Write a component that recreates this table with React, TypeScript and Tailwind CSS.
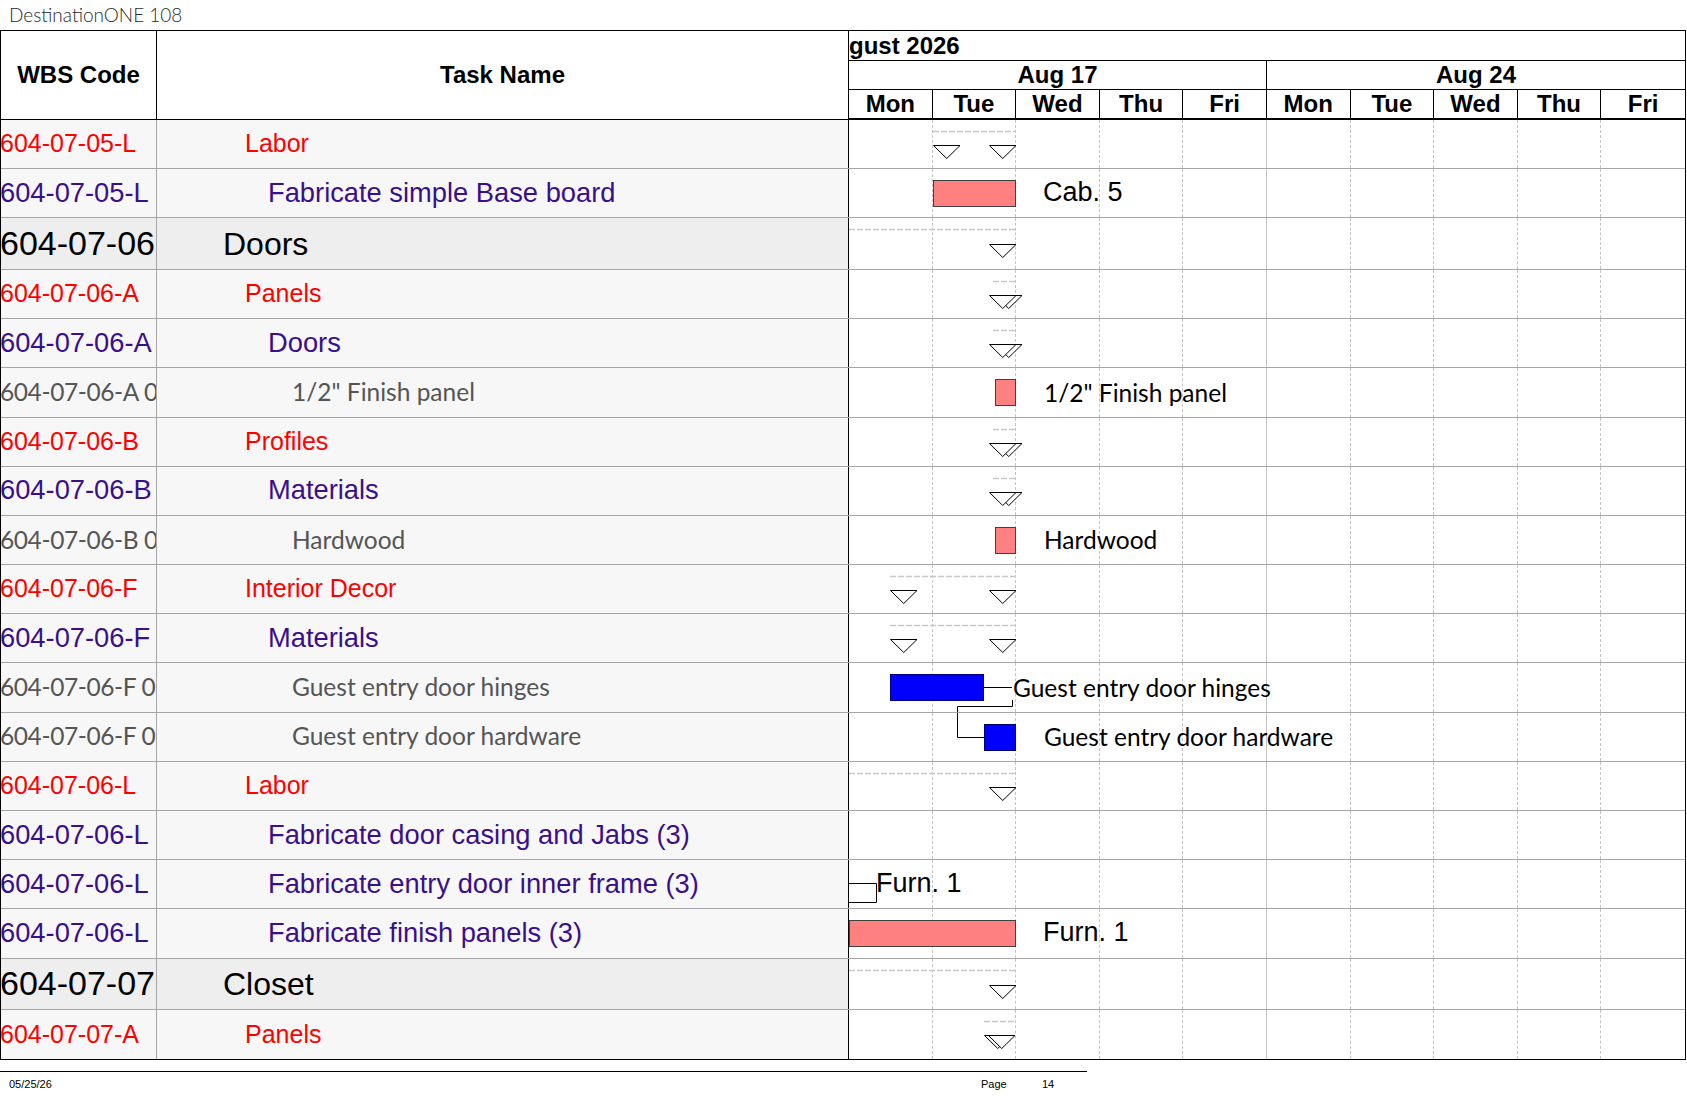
import React from "react";

type Level = 1 | 2 | 3 | 4;
type Row = {
  level: Level;
  wbs: string;
  task: string;
  dash?: [number, number];
  tris?: number[];
  dbl?: { front: number; back: number };
  bar?: { x1: number; x2: number; color: "pink" | "blue" };
  label?: { x: number; text: string; font: "arial" | "lato" };
  extra?: "hinges" | "hardware" | "furn";
};

const rows: Row[] = [
  { level: 2, wbs: "604-07-05-L", task: "Labor", dash: [84, 167], tris: [84, 140] },
  { level: 3, wbs: "604-07-05-L", task: "Fabricate simple Base board", bar: { x1: 84, x2: 167, color: "pink" }, label: { x: 194, text: "Cab. 5", font: "arial" } },
  { level: 1, wbs: "604-07-06", task: "Doors", dash: [0, 167], tris: [140] },
  { level: 2, wbs: "604-07-06-A", task: "Panels", dash: [144, 167], dbl: { front: 140, back: 146 } },
  { level: 3, wbs: "604-07-06-A", task: "Doors", dash: [144, 167], dbl: { front: 140, back: 146 } },
  { level: 4, wbs: "604-07-06-A 0", task: "1/2\" Finish panel", bar: { x1: 146, x2: 167, color: "pink" }, label: { x: 195, text: "1/2\" Finish panel", font: "lato" } },
  { level: 2, wbs: "604-07-06-B", task: "Profiles", dash: [144, 167], dbl: { front: 140, back: 146 } },
  { level: 3, wbs: "604-07-06-B", task: "Materials", dash: [144, 167], dbl: { front: 140, back: 146 } },
  { level: 4, wbs: "604-07-06-B 0", task: "Hardwood", bar: { x1: 146, x2: 167, color: "pink" }, label: { x: 195, text: "Hardwood", font: "lato" } },
  { level: 2, wbs: "604-07-06-F", task: "Interior Decor", dash: [41, 167], tris: [41, 140] },
  { level: 3, wbs: "604-07-06-F", task: "Materials", dash: [41, 167], tris: [41, 140] },
  { level: 4, wbs: "604-07-06-F 0", task: "Guest entry door hinges", bar: { x1: 41, x2: 135, color: "blue" }, label: { x: 164, text: "Guest entry door hinges", font: "lato" }, extra: "hinges" },
  { level: 4, wbs: "604-07-06-F 0", task: "Guest entry door hardware", bar: { x1: 135, x2: 167, color: "blue" }, label: { x: 195, text: "Guest entry door hardware", font: "lato" }, extra: "hardware" },
  { level: 2, wbs: "604-07-06-L", task: "Labor", dash: [0, 167], tris: [140] },
  { level: 3, wbs: "604-07-06-L", task: "Fabricate door casing and Jabs (3)" },
  { level: 3, wbs: "604-07-06-L", task: "Fabricate entry door inner frame (3)", label: { x: 27, text: "Furn. 1", font: "arial" }, extra: "furn" },
  { level: 3, wbs: "604-07-06-L", task: "Fabricate finish panels (3)", bar: { x1: 0, x2: 167, color: "pink" }, label: { x: 194, text: "Furn. 1", font: "arial" } },
  { level: 1, wbs: "604-07-07", task: "Closet", dash: [0, 167], tris: [140] },
  { level: 2, wbs: "604-07-07-A", task: "Panels", dash: [135, 167], dbl: { front: 139, back: 135 } },
];

const days = ["Mon", "Tue", "Wed", "Thu", "Fri", "Mon", "Tue", "Wed", "Thu", "Fri"];

function tri(x: number, y: number, key: string) {
  return (
    <polygon
      key={key}
      points={`${x + 0.5},${y + 0.5} ${x + 27},${y + 0.5} ${x + 13.75},${y + 13.5}`}
      fill="white"
      stroke="black"
      strokeWidth={1}
    />
  );
}

function wbsClass(l: Level) {
  if (l === 1) return "text-[34px] text-black";
  if (l === 2) return "text-[25px] text-[#ff0000]";
  if (l === 3) return "text-[27.3px] text-[#3a0f8c]";
  return "font-['Lato',sans-serif] text-[24.5px] tracking-[-0.4px] text-[#555555]";
}

function taskClass(l: Level) {
  if (l === 1) return "pl-[66px] text-[32px] text-black";
  if (l === 2) return "pl-[88px] text-[25px] text-[#ff0000]";
  if (l === 3) return "pl-[111px] text-[27.3px] text-[#3a0f8c]";
  return "pl-[135px] font-['Lato',sans-serif] text-[24.5px] text-[#555555]";
}

function GanttRow({ r, h }: { r: Row; h: number }) {
  const triTop = r.level === 1 ? 26 : 25;
  return (
    <div className="relative w-[837px] h-full border-l border-black bg-white">
      <div className="flex h-full">
        {days.map((d, i) =>
          i === 9 ? (
            <div key={i} className="w-[83.6px] h-full" />
          ) : i === 4 ? (
            <div key={i} className="w-[83.6px] h-full border-r border-[#c4c4c4]" />
          ) : (
            <div key={i} className="w-[83.6px] h-full border-r border-dashed border-[#c4c4c4]" />
          )
        )}
      </div>
      <svg className="absolute left-0 top-0 overflow-visible pointer-events-none" width={836} height={h}>
        {r.dash && (
          <line x1={r.dash[0]} y1={11.5} x2={r.dash[1]} y2={11.5} stroke="#c8c8c8" strokeWidth={1.6} strokeDasharray="6 2" />
        )}
        {r.tris && r.tris.map((x, i) => tri(x, triTop, "t" + i))}
        {r.dbl && [tri(r.dbl.back, 25, "b"), tri(r.dbl.front, 25, "f")]}
        {r.extra === "hinges" && (
          <>
            <line x1={135} y1={24.5} x2={163} y2={24.5} stroke="black" strokeWidth={1} />
            <polyline points={`163.5,37 163.5,43.5 108.5,43.5 108.5,${h}`} fill="none" stroke="black" strokeWidth={1} />
          </>
        )}
        {r.extra === "hardware" && (
          <polyline points="108.5,0 108.5,24.5 135,24.5" fill="none" stroke="black" strokeWidth={1} />
        )}
        {r.extra === "furn" && (
          <polyline points="0,23.5 27.5,23.5 27.5,42.5 0,42.5" fill="none" stroke="black" strokeWidth={1} />
        )}
      </svg>
      {r.bar && (
        <div
          className={
            r.bar.color === "pink"
              ? "absolute top-[11px] h-[27px] bg-[#ff8080] border border-[#404040]"
              : "absolute top-[11px] h-[27px] bg-[#0000ff] border border-[#00007a]"
          }
          style={{ left: r.bar.x1, width: r.bar.x2 - r.bar.x1 }}
        />
      )}
      {r.label && (
        <span
          className={
            r.label.font === "arial"
              ? "absolute top-[10px] whitespace-nowrap text-[27px] leading-[27px] text-black"
              : "absolute top-[10.5px] whitespace-nowrap font-['Lato',sans-serif] text-[24.5px] leading-[27px] text-black"
          }
          style={{ left: r.label.x }}
        >
          {r.label.text}
        </span>
      )}
    </div>
  );
}

export default function App() {
  return (
    <div className="w-[1687px] h-[1097px] bg-white overflow-hidden font-['Liberation_Sans',Arial,sans-serif]">
      <div className="h-[30px] flex items-center pl-[9px] font-['Lato',sans-serif] font-light text-[19px] text-[#2a2a2a]">
        DestinationONE 108
      </div>
      <div className="w-[1686px] border border-black">
        {/* header */}
        <div className="flex h-[89px]">
          <div className="w-[156px] h-full border-r border-b border-black flex items-center justify-center font-bold text-[24px] text-black">
            WBS Code
          </div>
          <div className="w-[691px] h-full border-b border-black flex items-center justify-center font-bold text-[24px] text-black">
            Task Name
          </div>
          <div className="w-[837px] h-full border-l border-black flex flex-col font-bold text-[24px] text-black">
            <div className="h-[30px] border-b border-black flex items-center whitespace-nowrap overflow-hidden">
              gust 2026
            </div>
            <div className="h-[29px] border-b border-black flex">
              <div className="w-[418px] border-r border-black flex items-center justify-center">Aug 17</div>
              <div className="w-[418px] flex items-center justify-center">Aug 24</div>
            </div>
            <div className="h-[30px] border-b-2 border-black flex">
              {days.map((d, i) =>
                i === 9 ? (
                  <div key={i} className="w-[83.6px] flex items-center justify-center">{d}</div>
                ) : (
                  <div key={i} className="w-[83.6px] border-r border-black flex items-center justify-center">{d}</div>
                )
              )}
            </div>
          </div>
        </div>
        {/* body */}
        {rows.map((r, i) => {
          const big = r.level === 1;
          const h = big ? 51.6 : 49.2;
          return (
            <div
              key={i}
              className={
                big
                  ? "flex h-[51.6px] border-b border-[#a6a6a6] last:border-b-0"
                  : "flex h-[49.2px] border-b border-[#a6a6a6] last:border-b-0"
              }
            >
              <div
                className={
                  (big ? "bg-[#eeeeee] " : "bg-[#f7f7f7] ") +
                  "w-[156px] h-full border-r border-[#a6a6a6] flex items-center overflow-hidden whitespace-nowrap"
                }
              >
                <span className={"-ml-[1px] " + wbsClass(r.level)}>{r.wbs}</span>
              </div>
              <div
                className={
                  (big ? "bg-[#eeeeee] " : "bg-[#f7f7f7] ") +
                  "w-[691px] h-full flex items-center overflow-hidden whitespace-nowrap"
                }
              >
                <span className={taskClass(r.level)}>{r.task}</span>
              </div>
              <GanttRow r={r} h={h} />
            </div>
          );
        })}
      </div>
      {/* footer */}
      <div className="w-[1087px] mt-[11px] border-t border-black flex pt-[6px] text-[11px] leading-[12px] text-black">
        <span className="pl-[9px] w-[981px]">05/25/26</span>
        <span className="w-[61px]">Page</span>
        <span>14</span>
      </div>
    </div>
  );
}
